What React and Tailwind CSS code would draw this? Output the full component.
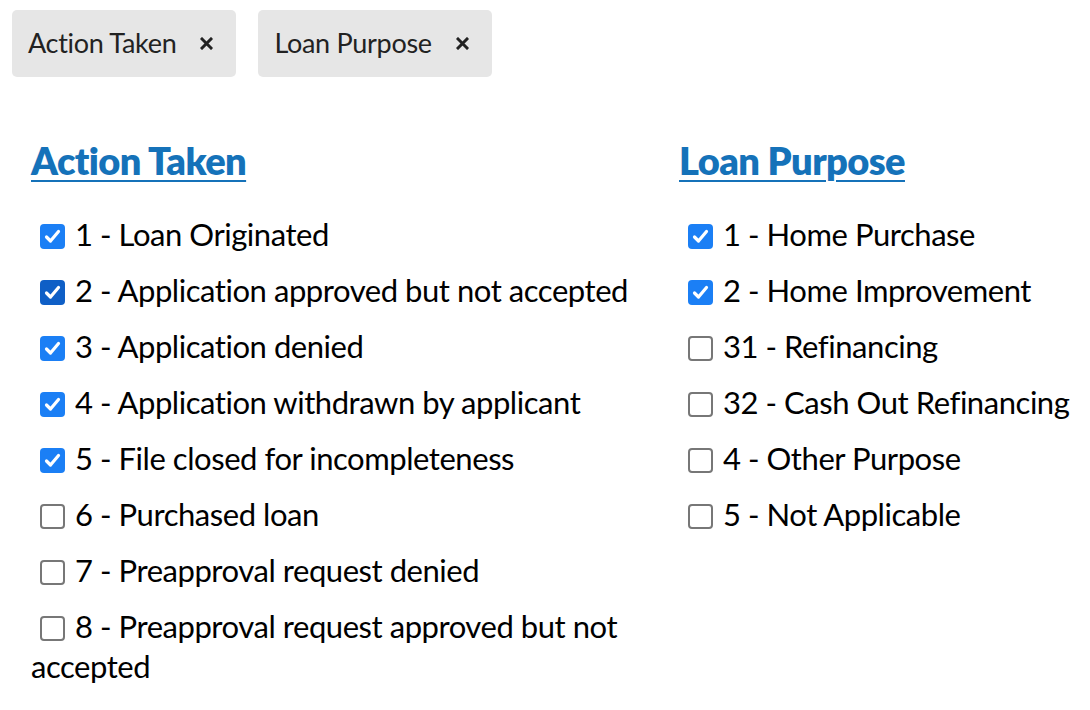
const actionTaken = [
  { label: "1 - Loan Originated", checked: true },
  { label: "2 - Application approved but not accepted", checked: true, focus: true },
  { label: "3 - Application denied", checked: true },
  { label: "4 - Application withdrawn by applicant", checked: true },
  { label: "5 - File closed for incompleteness", checked: true },
  { label: "6 - Purchased loan", checked: false },
  { label: "7 - Preapproval request denied", checked: false },
  { label: "8 - Preapproval request approved but not accepted", checked: false },
];

const loanPurpose = [
  { label: "1 - Home Purchase", checked: true },
  { label: "2 - Home Improvement", checked: true },
  { label: "31 - Refinancing", checked: false },
  { label: "32 - Cash Out Refinancing", checked: false },
  { label: "4 - Other Purpose", checked: false },
  { label: "5 - Not Applicable", checked: false },
];

const Pill = ({ text }) => (
  <div className="h-[67px] flex items-center pl-4 pr-[23px] bg-[#e6e6e6] rounded-[5px] text-[27px] tracking-[-0.3px] text-[#222]">
    <span>{text}</span>
    <svg className="ml-[24px]" width="13" height="13" viewBox="0 0 13 13">
      <path d="M2 2 L11 11 M11 2 L2 11" stroke="#222" strokeWidth="3" strokeLinecap="square" />
    </svg>
  </div>
);

const Box = ({ checked, focus }) =>
  checked ? (
    <span
      className={`inline-flex align-middle w-[25px] h-[25px] rounded-[4px] items-center justify-center ${
        focus ? "bg-[#0f5fc6]" : "bg-[#1b7ff5]"
      }`}
    >
      <svg width="17" height="17" viewBox="0 0 17 17">
        <path d="M2.5 9 L6.5 13 L14.5 3.5" fill="none" stroke="white" strokeWidth="3.2" strokeLinecap="round" strokeLinejoin="round" />
      </svg>
    </span>
  ) : (
    <span className="inline-block align-middle w-[25px] h-[25px] rounded-[4px] border-2 border-[#777] bg-white" />
  );

const Option = ({ label, checked, focus }) => (
  <label className="block text-[31px] leading-[40px] tracking-[-0.45px] text-black mb-4">
    <span className="inline-block ml-[9px] mr-[10px] relative -top-[2px]">
      <Box checked={checked} focus={focus} />
    </span>
    {label}
  </label>
);

const Group = ({ title, items, width }) => (
  <fieldset className={width}>
    <h2 className="text-[38px] leading-[46px] font-extrabold tracking-[-0.6px] text-[#1572b9] underline decoration-2 underline-offset-[5px] mb-[31px]">
      {title}
    </h2>
    {items.map((o) => (
      <Option key={o.label} {...o} />
    ))}
  </fieldset>
);

export default function App() {
  return (
    <div className="w-[1090px] h-[710px] bg-white overflow-hidden font-['Lato',sans-serif]">
      <div className="flex gap-[22px] pt-[10px] pl-[12px]">
        <Pill text="Action Taken" />
        <Pill text="Loan Purpose" />
      </div>
      <div className="flex pl-[31px] pt-[60px]">
        <Group title="Action Taken" items={actionTaken} width="w-[648px] pr-[20px]" />
        <Group title="Loan Purpose" items={loanPurpose} width="flex-1" />
      </div>
    </div>
  );
}
